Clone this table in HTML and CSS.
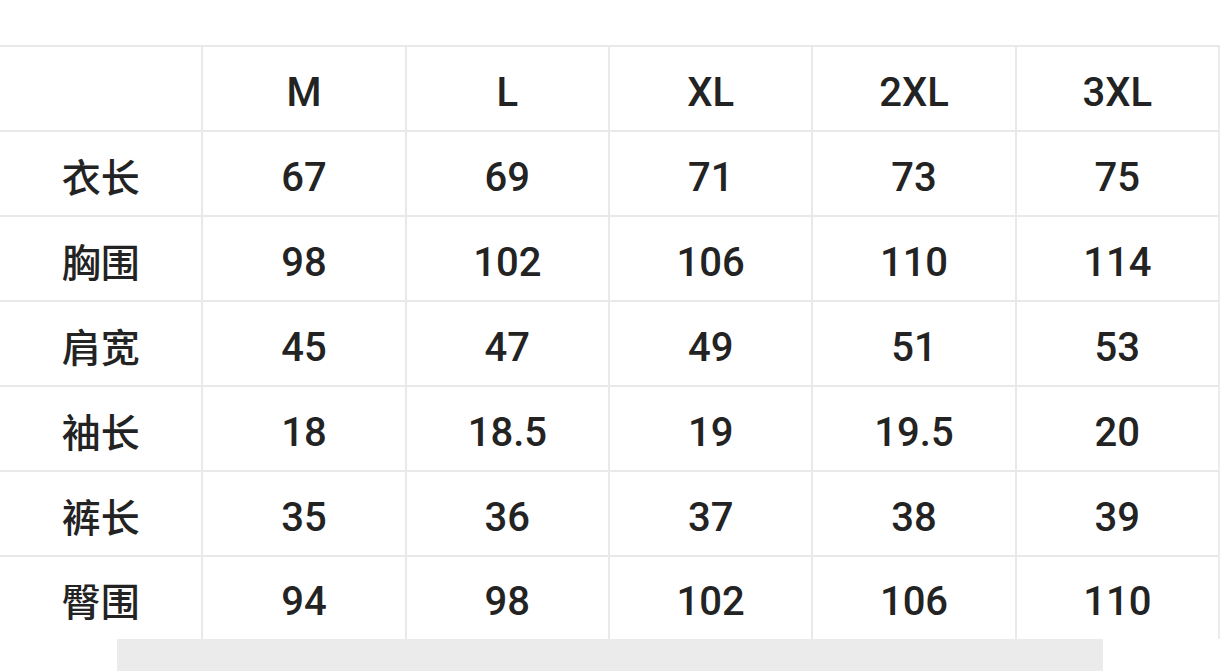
FILE: index.html
```html
<!DOCTYPE html>
<html lang="zh-CN">
<head>
<meta charset="utf-8">
<title>尺码表</title>
<link rel="stylesheet" href="styles.css">
</head>
<body>
<div class="page">
  <div class="size-table">
    <div class="cell corner"></div>
    <div class="cell head">M</div>
    <div class="cell head">L</div>
    <div class="cell head">XL</div>
    <div class="cell head">2XL</div>
    <div class="cell head">3XL</div>

    <div class="cell label">衣长</div>
    <div class="cell">67</div><div class="cell">69</div><div class="cell">71</div><div class="cell">73</div><div class="cell">75</div>

    <div class="cell label">胸围</div>
    <div class="cell">98</div><div class="cell">102</div><div class="cell">106</div><div class="cell">110</div><div class="cell">114</div>

    <div class="cell label">肩宽</div>
    <div class="cell">45</div><div class="cell">47</div><div class="cell">49</div><div class="cell">51</div><div class="cell">53</div>

    <div class="cell label">袖长</div>
    <div class="cell">18</div><div class="cell">18.5</div><div class="cell">19</div><div class="cell">19.5</div><div class="cell">20</div>

    <div class="cell label">裤长</div>
    <div class="cell">35</div><div class="cell">36</div><div class="cell">37</div><div class="cell">38</div><div class="cell">39</div>

    <div class="cell label last">臀围</div>
    <div class="cell last">94</div><div class="cell last">98</div><div class="cell last">102</div><div class="cell last">106</div><div class="cell last">110</div>
  </div>
  <div class="bottom-bar"></div>
</div>
</body>
</html>
```

FILE: styles.css
```css
html, body {
  margin: 0;
  padding: 0;
  background: #ffffff;
}

.page {
  width: 1220px;
  height: 671px;
  overflow: hidden;
  padding-top: 45px;
  box-sizing: border-box;
  font-family: Roboto, "Noto Sans CJK SC", sans-serif;
  color: #232323;
}

.size-table {
  display: grid;
  grid-template-columns: repeat(6, 1fr);
  grid-template-rows: repeat(6, 85px) 82px;
  width: 1220px;
  border-top: 2px solid #e9e9e9;
  box-sizing: border-box;
}

.cell {
  display: flex;
  align-items: center;
  justify-content: center;
  border-right: 2px solid #e9e9e9;
  border-bottom: 2px solid #e9e9e9;
  font-size: 40px;
  font-weight: 500;
  padding-top: 7px;
  box-sizing: border-box;
}

.cell:nth-child(6n) {
  border-right: 2px solid #ececec;
}

.cell.last {
  border-bottom: none;
}

.label {
  font-family: "Noto Sans CJK SC", sans-serif;
  font-weight: 500;
  font-size: 39px;
  padding-top: 2px;
}

.bottom-bar {
  margin-left: 117px;
  width: 986px;
  height: 40px;
  background: #ebebeb;
}
```
